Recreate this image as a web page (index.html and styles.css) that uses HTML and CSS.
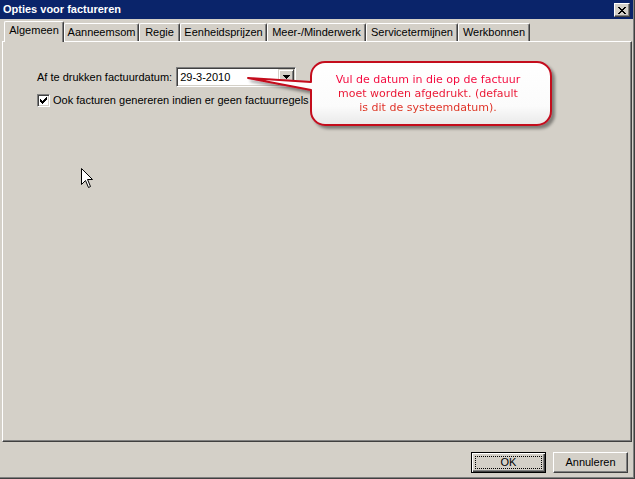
FILE: index.html
```html
<!DOCTYPE html>
<html lang="nl">
<head>
<meta charset="utf-8">
<title>Opties voor factureren</title>
<link rel="stylesheet" href="styles.css">
</head>
<body>
<div class="window">
  <div class="titlebar">
    <span class="title">Opties voor factureren</span>
    <span class="close">
      <svg width="8" height="7" viewBox="0 0 8 7" shape-rendering="crispEdges">
        <path d="M0 0h2v1h-2zM6 0h2v1h-2zM1 1h2v1h-2zM5 1h2v1h-2zM2 2h4v1h-4zM3 3h2v1h-2zM2 4h4v1h-4zM1 5h2v1h-2zM5 5h2v1h-2zM0 6h2v1h-2zM6 6h2v1h-2z" fill="#000"/>
      </svg>
    </span>
  </div>

  <div class="tabs">
    <span class="tab selected w-alg">Algemeen</span>
    <span class="tab w-aan">Aanneemsom</span>
    <span class="tab w-reg">Regie</span>
    <span class="tab w-een">Eenheidsprijzen</span>
    <span class="tab w-mee">Meer-/Minderwerk</span>
    <span class="tab w-ser">Servicetermijnen</span>
    <span class="tab w-wer">Werkbonnen</span>
  </div>

  <div class="panel">
    <div class="field-row">
      <span class="label">Af te drukken factuurdatum:</span>
      <div class="combo">
        <span class="combo-text">29-3-2010</span>
        <span class="combo-btn">
          <svg width="7" height="4" viewBox="0 0 7 4" shape-rendering="crispEdges"><path d="M0 0h7v1h-7zM1 1h5v1h-5zM2 2h3v1h-3zM3 3h1v1h-1z" fill="#000"/></svg>
        </span>
      </div>
    </div>
    <div class="check-row">
      <span class="checkbox">
        <svg width="7" height="7" viewBox="0 0 7 7" shape-rendering="crispEdges"><path d="M6 0h1v3h-1zM5 1h1v3h-1zM4 2h1v3h-1zM0 2h1v3h-1zM1 3h1v3h-1zM2 4h1v3h-1zM3 3h1v3h-1z" fill="#000"/></svg>
      </span>
      <span class="check-label">Ook facturen genereren indien er geen factuurregels</span>
    </div>
  </div>

  <div class="footer">
    <span class="btn default"><span class="btn-text">OK</span></span>
    <span class="btn"><span class="btn-text">Annuleren</span></span>
  </div>

  <svg class="callout" width="325" height="80" viewBox="240 55 325 80">
    <defs>
      <linearGradient id="bubbleFill" x1="0" y1="0" x2="0" y2="1">
        <stop offset="0" stop-color="#ffffff"/>
        <stop offset="0.7" stop-color="#fbfbfb"/>
        <stop offset="1" stop-color="#e9e9e9"/>
      </linearGradient>
      <filter id="shadow" x="-10%" y="-20%" width="130%" height="150%">
        <feDropShadow dx="3" dy="3" stdDeviation="1.8" flood-color="#000" flood-opacity="0.4"/>
      </filter>
    </defs>
    <path d="M325 62H537A14 14 0 0 1 551 76V111A14 14 0 0 1 537 125H325A14 14 0 0 1 311 111V90L248 78L311 82V76A14 14 0 0 1 325 62Z" fill="url(#bubbleFill)" stroke="#c40a1e" stroke-width="2" stroke-linejoin="round" filter="url(#shadow)"/>
  </svg>
  <div class="callout-text">Vul de datum in die op de factuur<br>moet worden afgedrukt. (default<br>is dit de systeemdatum).</div>

  <svg class="cursor" width="13" height="21" viewBox="0 0 13 21">
    <path d="M0.5 0.5V16.5L4.5 12.5L7.5 19.5L9.5 18.5L6.5 11.5H11.5Z" fill="#fff" stroke="#000" stroke-width="1" stroke-linejoin="miter"/>
  </svg>
</div>
</body>
</html>
```

FILE: styles.css
```css
html, body {
  margin: 0;
  padding: 0;
}
body {
  background: #d4d0c8;
  font-family: "Liberation Sans", Arial, sans-serif;
  font-size: 11px;
  color: #000;
}
.window {
  position: relative;
  width: 635px;
  height: 479px;
  box-sizing: border-box;
  background: #d4d0c8;
  border-right: 1px solid #404040;
  border-bottom: 1px solid #404040;
  box-shadow: inset -1px -1px 0 #808080;
  display: flex;
  flex-direction: column;
  overflow: hidden;
}
.titlebar {
  height: 19px;
  margin-right: 1px;
  background: #0a246a;
  display: flex;
  align-items: flex-start;
}
.title {
  color: #fff;
  font-weight: bold;
  font-size: 11px;
  line-height: 19px;
  padding-left: 3px;
}
.close {
  margin-left: auto;
  margin-right: 3px;
  margin-top: 3px;
  width: 16px;
  height: 14px;
  box-sizing: border-box;
  background: #d4d0c8;
  border: 1px solid;
  border-color: #fff #404040 #404040 #fff;
  box-shadow: inset -1px -1px 0 #808080;
  display: flex;
  align-items: center;
  justify-content: center;
  padding-right: 1px;
}
.close svg { display: block; }

.tabs {
  height: 20px;
  margin-top: 2px;
  padding-left: 4px;
  display: flex;
  align-items: flex-end;
}
.tab {
  height: 18px;
  box-sizing: border-box;
  border-top: 1px solid #fff;
  border-left: 1px solid #fff;
  border-right: 1px solid #404040;
  border-radius: 2px 2px 0 0;
  box-shadow: inset -1px 0 0 #808080;
  text-align: center;
  line-height: 17px;
  white-space: nowrap;
  background: #d4d0c8;
}
.tab.selected {
  height: 21px;
  margin-bottom: -1px;
  line-height: 17px;
  position: relative;
  z-index: 1;
}
.w-alg { width: 60px; }
.w-aan { width: 75px; }
.w-reg { width: 41px; }
.w-een { width: 87px; }
.w-mee { width: 99px; }
.w-ser { width: 92px; }
.w-wer { width: 72px; }

.panel {
  flex: 1;
  margin: 0 2px 0 2px;
  box-sizing: border-box;
  border-top: 1px solid #fff;
  border-left: 1px solid #fff;
  border-right: 1px solid #404040;
  border-bottom: 1px solid #404040;
  box-shadow: inset -1px -1px 0 #808080;
  padding: 25px 0 0 34px;
}
.field-row {
  display: flex;
  align-items: center;
  gap: 4px;
  height: 20px;
}
.combo {
  width: 120px;
  height: 20px;
  box-sizing: border-box;
  background: #fff;
  border: 1px solid;
  border-color: #808080 #fff #fff #808080;
  box-shadow: inset 1px 1px 0 #404040, inset -1px -1px 0 #d4d0c8;
  display: flex;
  align-items: center;
  padding: 1px 1px 1px 3px;
}
.combo-text {
  flex: 1;
  font-size: 11px;
}
.combo-btn {
  width: 16px;
  height: 16px;
  box-sizing: border-box;
  background: #d4d0c8;
  border: 1px solid;
  border-color: #d4d0c8 #404040 #404040 #d4d0c8;
  box-shadow: inset 1px 1px 0 #fff, inset -1px -1px 0 #808080;
  display: flex;
  align-items: center;
  justify-content: center;
}
.combo-btn svg { display: block; }

.check-row {
  margin-top: 7px;
  display: flex;
  align-items: center;
  gap: 3px;
  height: 13px;
}
.checkbox {
  width: 13px;
  height: 13px;
  box-sizing: border-box;
  background: #fff;
  border: 1px solid;
  border-color: #808080 #fff #fff #808080;
  box-shadow: inset 1px 1px 0 #404040, inset -1px -1px 0 #d4d0c8;
  display: flex;
  align-items: center;
  justify-content: center;
}
.checkbox svg { display: block; }
.check-label {
  white-space: nowrap;
  line-height: 13px;
}

.footer {
  height: 36px;
  box-sizing: border-box;
  padding: 10px 6px 0 0;
  display: flex;
  justify-content: flex-end;
  align-items: flex-start;
  gap: 7px;
}
.btn {
  position: relative;
  width: 75px;
  height: 21px;
  box-sizing: border-box;
  background: #d4d0c8;
  border: 1px solid;
  border-color: #fff #404040 #404040 #fff;
  box-shadow: inset -1px -1px 0 #808080;
  display: flex;
  align-items: center;
  justify-content: center;
}
.btn.default {
  border: 1px solid #000;
  box-shadow: inset 1px 1px 0 #fff, inset -1px -1px 0 #404040, inset -2px -2px 0 #808080;
}
.btn.default::after {
  content: "";
  position: absolute;
  left: 3px;
  top: 3px;
  right: 3px;
  bottom: 3px;
  border: 1px dotted #000;
}
.btn-text {
  line-height: 13px;
}

.callout {
  position: absolute;
  left: 240px;
  top: 55px;
  overflow: visible;
}
.callout-text {
  position: absolute;
  left: 311px;
  top: 63px;
  width: 234px;
  padding-top: 10px;
  text-align: center;
  font-family: "DejaVu Sans", Verdana, sans-serif;
  font-size: 11px;
  line-height: 14px;
  white-space: nowrap;
  color: #f0003c;
  background: linear-gradient(180deg, #ff0040 0%, #f0083a 45%, #d83a18 100%);
  -webkit-background-clip: text;
  background-clip: text;
  -webkit-text-fill-color: transparent;
}
.cursor {
  position: absolute;
  left: 81px;
  top: 168px;
}
```
